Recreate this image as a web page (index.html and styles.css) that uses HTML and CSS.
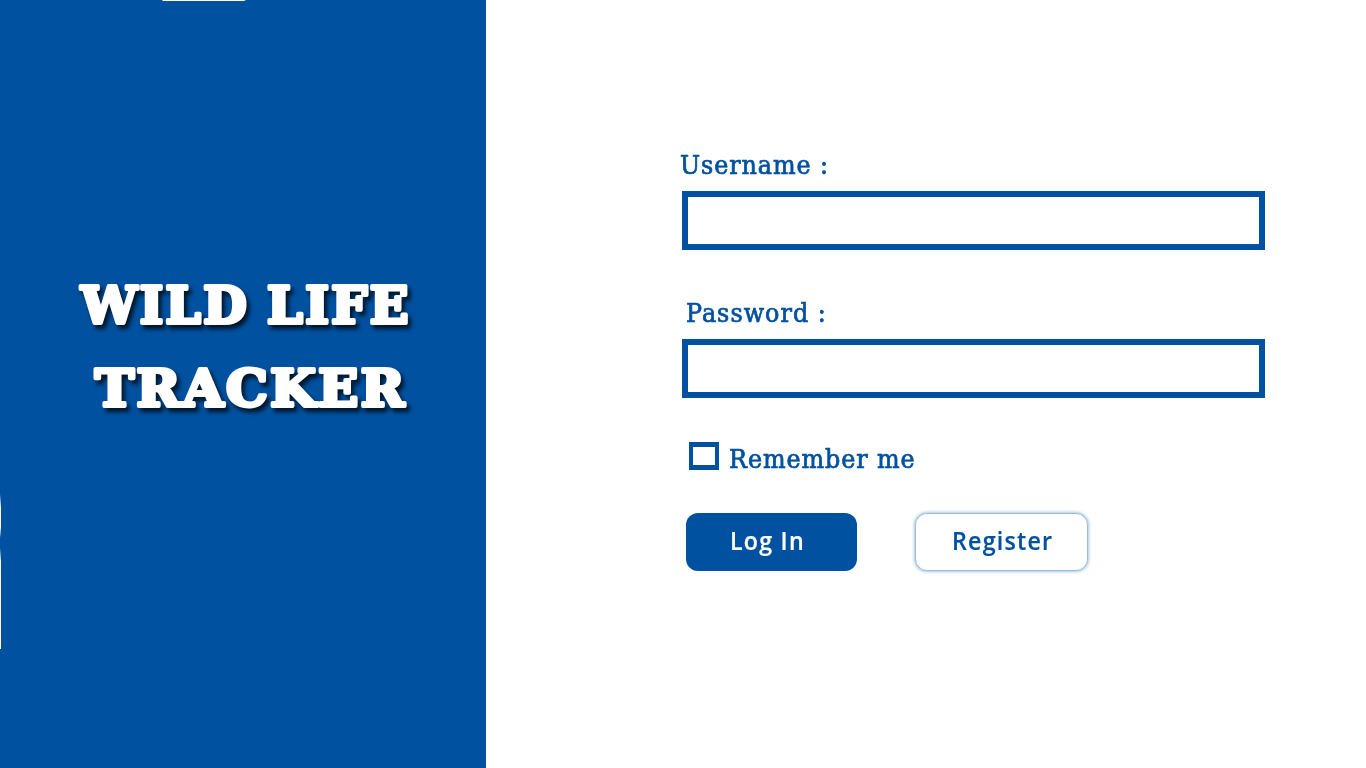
FILE: index.html
```
<!DOCTYPE html>
<html lang="en">
<head>
<meta charset="utf-8">
<title>Wild Life Tracker</title>
<link rel="stylesheet" href="styles.css">
</head>
<body>
<div class="page">
  <aside class="brand">
    <svg class="brand-edges" width="486" height="768" aria-hidden="true">
      <path d="M162 0H246L244 1H163Z"/>
      <path d="M0 494L1 508V527L0 538V548L1 562V649H0Z"/>
    </svg>
    <h1 class="brand-title">
      <svg width="486" height="180" viewBox="0 260 486 180">
        <text x="81" y="323" textLength="168" lengthAdjust="spacingAndGlyphs">WILD</text>
        <text x="267" y="323" textLength="144" lengthAdjust="spacingAndGlyphs">LIFE</text>
        <text x="95" y="406" textLength="312" lengthAdjust="spacingAndGlyphs">TRACKER</text>
      </svg>
    </h1>
  </aside>
  <main class="panel">
    <form class="login">
      <label class="label label-user" for="username">Username :</label>
      <input class="field" id="username" type="text">
      <label class="label label-pass" for="password">Password :</label>
      <input class="field" id="password" type="password">
      <label class="remember"><input class="check" type="checkbox"><span class="label label-remember">Remember me</span></label>
      <div class="actions">
        <button class="button button-primary" type="button"><span class="caption">Log In</span></button>
        <button class="button button-outline" type="button"><span class="caption">Register</span></button>
      </div>
    </form>
  </main>
</div>
</body>
</html>
```
FILE: styles.css
```
* { box-sizing: border-box; }
body { margin: 0; background: #fff; }
.page { display: flex; width: 1366px; height: 768px; overflow: hidden; }
.brand { position: relative; display: flex; width: 486px; padding-top: 260px; background: #0051a0; }
.brand-edges { position: absolute; top: 0; left: 0; fill: #fff; }
.brand-title { margin: 0; height: 180px; font-size: 53px; }
.brand-title svg { display: block; overflow: visible; filter: drop-shadow(3px 4px 2px rgba(0, 0, 0, .75)); }
.brand-title text {
  font: bold 51px "DejaVu Serif", serif; letter-spacing: 2.5px;
  fill: #fff; stroke: #fff; stroke-width: 4px; stroke-linejoin: round;
}
.panel { flex: 1; padding: 148px 0 0 196px; }
.login { display: flex; flex-direction: column; width: 583px; }
.label {
  font: 26px/35px "DejaVu Serif Condensed", "DejaVu Serif", serif;
  letter-spacing: .9px; color: #0051a0; -webkit-text-stroke: .7px #0051a0; white-space: nowrap;
  transform: scaleX(1.02); transform-origin: left;
}
.label-user { height: 43px; margin-left: -2px; }
.label-pass { height: 43px; margin: 46px 0 0 4px; letter-spacing: 1px; }
.field { width: 583px; height: 59px; border: 6px solid #0051a0; border-radius: 0; background: #fff; outline: none; padding: 0 12px; font: 24px "Liberation Serif", serif; }
.remember { display: flex; align-items: flex-start; height: 34px; margin: 44px 0 0 7px; }
.check { appearance: none; flex: none; width: 30px; height: 28px; margin: 0 10px 0 0; border: 4px solid #0051a0; border-top-width: 5px; border-bottom-width: 5px; background: #fff; }
.actions { display: flex; gap: 58px; margin: 37px 0 0 4px; }
.button { height: 58px; padding: 0 0 5px; border: 0; border-radius: 12px; font: 600 25px/30px "Open Sans", sans-serif; letter-spacing: 1.3px; text-align: left; }
.button-primary { width: 171px; padding-left: 44px; background: #0051a0; color: #fff; }
.button-outline { width: 173px; padding-left: 36px; border: 1px solid #9bbddd; background: #fff; color: #0051a0; box-shadow: 0 0 3px 1px #a9c7e3; }
.caption { display: block; transform: scaleX(.93); transform-origin: left; white-space: nowrap; -webkit-text-stroke: .2px currentColor; }
```
